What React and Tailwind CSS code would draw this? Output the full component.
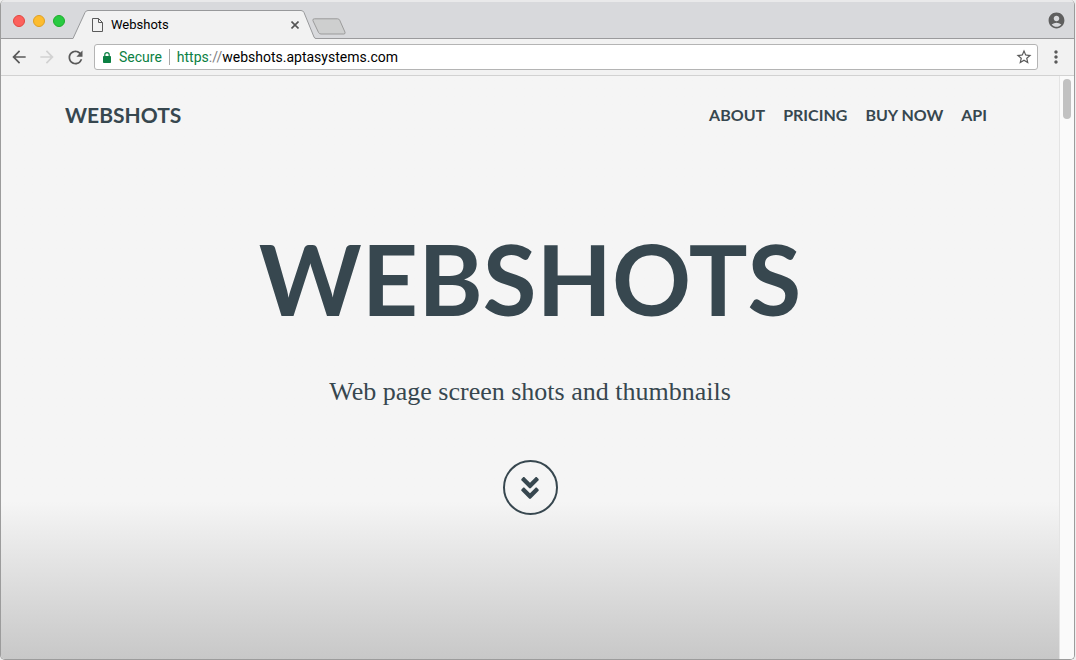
import React, { useState } from "react";
import {
  MdAccountCircle,
  MdArrowBack,
  MdArrowForward,
  MdMoreVert,
  MdRefresh,
  MdStarBorder,
} from "react-icons/md";
import { FaAngleDoubleDown } from "react-icons/fa";

const links = [
  { label: "About", href: "#about" },
  { label: "Pricing", href: "#pricing" },
  { label: "Buy Now", href: "#buy" },
  { label: "API", href: "#api" },
];

function TabStrip() {
  return (
    <div className="flex h-[39px] items-end border-t-2 border-[#e9e9ea] bg-[#d8d9dc] shadow-[inset_0_-1px_0_#9b9b9d]">
      <div className="flex h-full w-[72px] items-center gap-2 pl-3">
        <button aria-label="Close window" className="size-3 rounded-full border border-[#e2463f] bg-[#fc615d]" />
        <button aria-label="Minimize window" className="size-3 rounded-full border border-[#dfa023] bg-[#fdbc2f]" />
        <button aria-label="Zoom window" className="size-3 rounded-full border border-[#1dad2b] bg-[#28ca41]" />
      </div>

      {/* Active tab */}
      <div className="relative flex h-[29px] w-[243px] items-center pr-[13px] pl-[19px]">
        <svg className="absolute inset-0 h-full w-full" viewBox="0 0 243 29" preserveAspectRatio="none">
          <path d="M0 28.5 L12 2.5 Q13 .5 15 .5 H228 Q230 .5 231 2.5 L241 27 Q241.7 28.5 243 28.5 V29 H0 Z" fill="#f2f2f2" />
          <path d="M0 28.5 L12 2.5 Q13 .5 15 .5 H228 Q230 .5 231 2.5 L241 27 Q241.7 28.5 243 28.5" fill="none" stroke="#98999b" />
        </svg>
        <svg className="relative h-[14px] w-[11px]" viewBox="0 0 11 14" fill="none" stroke="#5a5a5a">
          <path d="M.5 .5 H6.5 L10.5 4.5 V13.5 H.5 Z M6.5 .5 V4.5 H10.5" />
        </svg>
        <span className="relative ml-2 grow text-[13px] text-black">Webshots</span>
        <button aria-label="Close tab" className="relative flex size-4 items-center justify-center">
          <svg className="size-2" viewBox="0 0 8 8" stroke="#555" strokeWidth="1.6">
            <path d="M.5 .5 L7.5 7.5 M7.5 .5 L.5 7.5" />
          </svg>
        </button>
      </div>

      <button aria-label="New tab" className="-ml-1 pb-1">
        <svg className="block h-[17px] w-[34px]" viewBox="0 0 34 17">
          <path
            d="M2.5 .8 H25.5 Q27 .8 27.7 2.2 L33 14.2 Q33.5 16 31.8 16 H9 Q7.3 16 6.6 14.6 L.9 2.6 Q.3 .9 2.5 .8 Z"
            fill="#cecfcf"
            stroke="#9b9b9b"
          />
        </svg>
      </button>

      <button aria-label="Profile" className="ml-auto flex h-full items-center pr-2 text-[#5f5f5f]">
        <MdAccountCircle size={19} />
      </button>
    </div>
  );
}

function Toolbar() {
  const [host, setHost] = useState("webshots.aptasystems.com");

  return (
    <div className="flex h-[37px] items-center border-b border-[#d2d2d2] bg-[#f2f2f2] pl-2 text-[#5a5a5a]">
      <button aria-label="Back" className="mr-2">
        <MdArrowBack size={20} />
      </button>
      <button aria-label="Forward" className="mr-2 text-[#d2d2d2]" disabled>
        <MdArrowForward size={20} />
      </button>
      <button aria-label="Reload" className="mr-2">
        <MdRefresh size={21} />
      </button>

      <div className="flex h-[26px] min-w-0 grow items-center rounded-[3px] border border-[#b4b4b4] bg-white pr-1 pl-2 text-sm">
        <svg className="h-[11px] w-2 shrink-0" viewBox="0 0 8 11">
          <rect y="4" width="8" height="7" rx=".8" fill="#0b8043" />
          <path d="M1.8 4.5 V2.8 a2.2 2.2 0 0 1 4.4 0 V4.5" fill="none" stroke="#0b8043" strokeWidth="1.2" />
        </svg>
        <span className="ml-2 text-[#0b8043]">Secure</span>
        <span className="mx-[7px] h-4 w-px bg-[#a8a8a8]" />
        <label htmlFor="address" className="text-[#0b8043]">
          https<span className="text-[#808080]">://</span>
        </label>
        <input
          id="address"
          value={host}
          onChange={(e) => setHost(e.target.value)}
          className="min-w-0 grow bg-transparent text-black outline-none"
        />
        <button aria-label="Bookmark this page">
          <MdStarBorder size={18} />
        </button>
      </div>

      <button aria-label="Menu" className="px-2">
        <MdMoreVert size={20} />
      </button>
    </div>
  );
}

function Page() {
  return (
    <div className="flex grow">
      <div className="flex grow flex-col bg-linear-to-b from-[#f5f5f5] from-73% to-[#c8c8c8] font-['Lato',sans-serif] text-[#37474f]">
        <header className="flex h-[78px] items-center justify-between pr-[72px] pl-16">
          <a href="#top" className="text-[21px] font-bold uppercase">
            Webshots
          </a>
          <nav className="flex gap-[18px] text-base font-bold uppercase">
            {links.map((link) => (
              <a key={link.label} href={link.href}>
                {link.label}
              </a>
            ))}
          </nav>
        </header>

        <main className="flex flex-col items-center pt-[74px]">
          <h1 className="text-[98px] leading-[100px] font-bold uppercase">Webshots</h1>
          <p className="mt-12 font-['Liberation_Serif',serif] text-[26px] leading-8">
            Web page screen shots and thumbnails
          </p>
          <a
            href="#about"
            aria-label="Scroll down"
            className="mt-[52px] flex size-[55px] items-center justify-center rounded-full border-2 border-[#37474f]"
          >
            <FaAngleDoubleDown size={28} />
          </a>
        </main>
      </div>

      {/* Scrollbar */}
      <div className="flex w-[15px] justify-center border-l border-[#e4e4e4] bg-[#fafafa] pt-[3px]">
        <div className="h-10 w-2 rounded-full bg-[#c1c1c1]" />
      </div>
    </div>
  );
}

export default function App() {
  return (
    <div className="flex min-h-screen flex-col bg-[#eeeeee] pr-px font-['Roboto',sans-serif]">
      <div className="flex grow flex-col overflow-hidden rounded-[5px] border-x border-b border-[#9c9c9c]">
        <TabStrip />
        <Toolbar />
        <Page />
      </div>
    </div>
  );
}
